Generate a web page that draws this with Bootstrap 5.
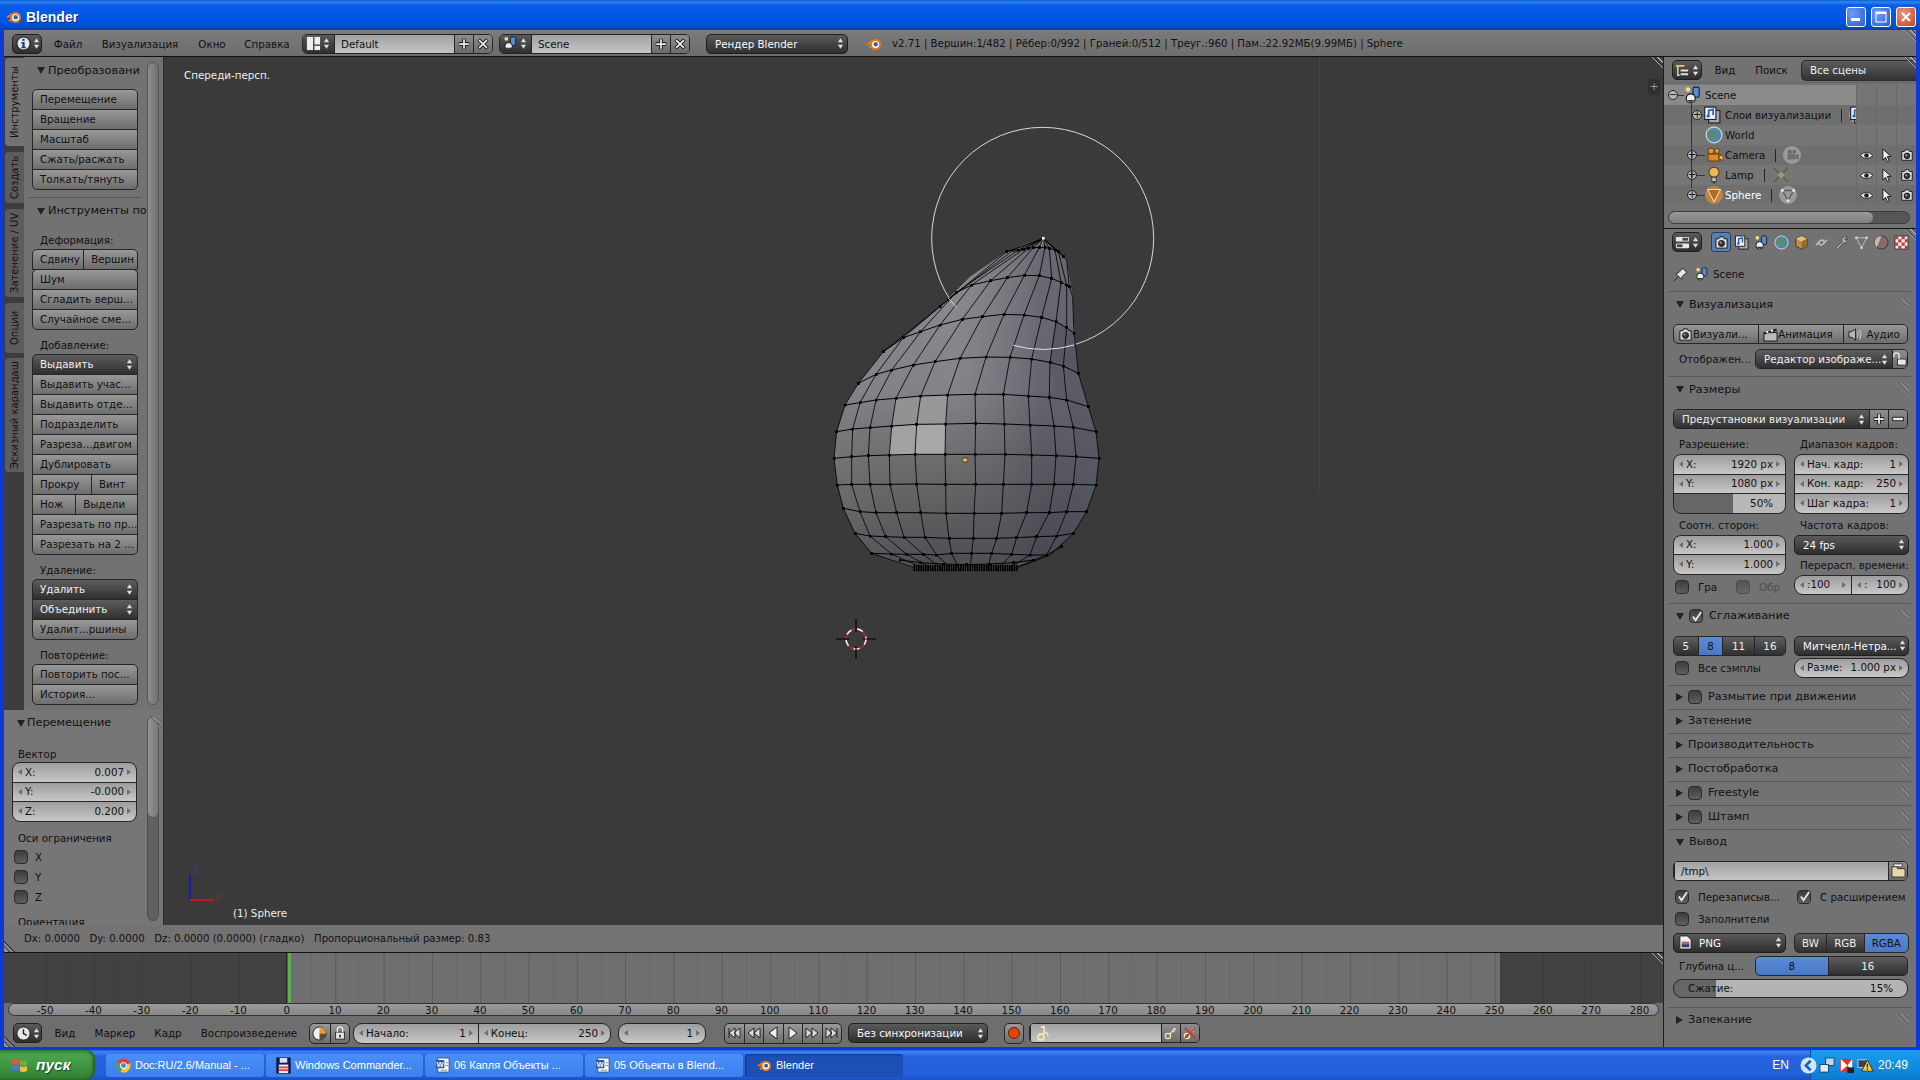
<!DOCTYPE html>
<html lang="ru">
<head>
<meta charset="utf-8">
<title>Blender</title>
<link href="https://cdn.jsdelivr.net/npm/bootstrap@5.3.0/dist/css/bootstrap.min.css" rel="stylesheet">
<style>
html,body{height:1080px;width:1920px;margin:0;overflow:hidden}
body{font-family:"DejaVu Sans",sans-serif;font-size:10.3px;line-height:16px;color:#111;background:#0a3ad8}
svg{display:block;flex:none}
.xp-title{height:30px;background:linear-gradient(#0b5ad8 0,#2f86f2 2px,#0c5ce6 5px,#0058e6 16px,#0055e0 22px,#0048c6 28px,#0a3ea8 30px);color:#fff;padding:3px 0 0 6px}
.xp-title b{font:bold 14px "Liberation Sans",sans-serif;margin-left:4px;text-shadow:1px 1px 0 #0a2a80}
.xp-ctl{width:20px;height:20px;border:1px solid #fff;border-radius:3px;background:radial-gradient(circle at 30% 30%,#6f9cf2,#2a5ad8);margin-left:5px}
.xp-x{background:radial-gradient(circle at 35% 30%,#eb9a80,#c8401c)}
.xp-app{height:1020px;border:solid #0a3ad8;border-width:0 4px 3px}
.t-head{height:27px;background:linear-gradient(#7b7b7b,#6d6d6d);border-bottom:1px solid #111;display:grid;align-items:center;position:relative}
.t-main{grid-template-columns:8px 30px 52px 92px 52px 58px 6px 191px 6px 191px 16px 142px 18px 16px 10px 1fr;padding-top:1px}
.t-tl{height:31px;border:0;grid-template-columns:9px 29px 46px 54px 52px 110px 5px 41px 3px 258px 7px 88px 18px 118px 6px 140px 16px 20px 5px 171px 1fr;background:#6e6e6e;padding-top:3px}
.t-c{text-align:center;white-space:nowrap;font-size:10.3px}
.t-info{font-size:10.2px;white-space:nowrap}
.bl-sel{height:20px;background:linear-gradient(#5a5a5a,#2e2e2e);border:1px solid #1f1f1f;border-radius:5px;padding:0 3px 0 4px;gap:2px;white-space:nowrap;overflow:hidden}
.w30{width:30px;padding:0;flex:none}
.bl-dg{height:20px;border:1px solid #242424;border-radius:5px;overflow:hidden}
.bl-dg-ic{background:linear-gradient(#5a5a5a,#2e2e2e);gap:2px;padding:0 3px;width:31px;height:100%}
.bl-dg-f{flex:1;height:100%;background:linear-gradient(#a2a2a2,#c4c4c4);border-left:1px solid #242424;padding:0 6px;line-height:18px;font-size:10.3px}
.bl-dg-b{width:19px;height:100%;background:linear-gradient(#8d8d8d,#6c6c6c);border-left:1px solid #242424}
.bl-btn{--bs-btn-border-radius:5px;height:21px;padding:0 7px;font-size:10.3px;line-height:19px;text-align:left;white-space:nowrap;overflow:hidden;color:#111;background:linear-gradient(#989898,#6d6d6d);border:1px solid #262626}
.s20>.btn,.btn.s20{height:20px}
.bl-drk{color:#eee;background:linear-gradient(#5e5e5e,#2f2f2f)}
.bl-blue{color:#111;background:linear-gradient(#5b8ad6,#4a78c4)}
.bl-ctr{text-align:center;padding:0}
.bl-t{height:20.5px}
.bl-num{--bs-btn-border-radius:8px;padding:0 5px;background:linear-gradient(#9d9d9d,#c8c8c8);color:#111;display:flex;align-items:center;justify-content:space-between}
.bl-num span{display:flex;align-items:center}
.bl-al{width:0;height:0;border:3px solid transparent;border-right:4px solid #6e6e6e;border-left:0;margin-right:3px}
.bl-ar{width:0;height:0;border:3px solid transparent;border-left:4px solid #6e6e6e;border-right:0;margin-left:3px}
.bl-pct{justify-content:flex-end;padding-right:12px;background:linear-gradient(90deg,#666 0,#666 53%,#b8b8b8 53%,#b8b8b8 100%)}
.bl-cmp{background:linear-gradient(90deg,#666 0,#666 18%,#b4b4b4 18%,#b4b4b4 100%);height:19px;padding:0 14px}
.bl-tabs{width:20px;background:#3d3d3d;padding-top:1px}
.bl-tab{margin-left:1px;width:19px;writing-mode:vertical-rl;transform:rotate(180deg);background:#5c5c5c;border-radius:0 4px 4px 0;text-align:center;line-height:19px;font-size:10px;color:#111;overflow:hidden;white-space:nowrap}
.bl-tab.on{background:#737373}
.th1{height:88px}.th2{height:51px;margin-top:6px}.th3{height:88px;margin-top:6px}.th4{height:50px;margin-top:6px}.th5{height:114px;margin-top:5px}
.bl-shelf{height:653px}
.bl-sb{width:139px;background:#727272;position:relative;overflow:hidden}
.bl-col{margin-left:8px;width:106px}
.bl-hd{height:27px;font-size:11.3px;white-space:nowrap;position:relative;padding-left:13px;width:127px;overflow:hidden}
.bl-hd .tri-d{margin-right:3px}
.bl-hr{height:1px;margin:7px 22px 0 5px;background:#565656;opacity:1;border:0}
.bl-hd.h2{height:26px}
.tri-d{width:0;height:0;border:solid transparent;border-width:7px 4.5px 0;border-top-color:#222;margin-right:5px;flex:none}
.tri-r{width:0;height:0;border:solid transparent;border-width:4.5px 0 4.5px 7px;border-left-color:#222;margin-right:5px;flex:none}
.bl-lb{height:16px;line-height:16px;white-space:nowrap;overflow:hidden;padding-left:16px}
.m1{margin-top:1px}.m2{margin-top:2px}.m3{margin-top:3px}.m4{margin-top:4px}.m5{margin-top:5px}.m6{margin-top:6px}.m7{margin-top:7px}.m8{margin-top:8px}.m9{margin-top:9px}.m10{margin-top:10px}
.bl-scr{position:absolute;left:123px;width:12px;border:1px solid #555;border-radius:6px;background:linear-gradient(90deg,#8f8f8f,#6f6f6f)}
.bs1{top:5px;height:643px}
.bl-op{height:215px;width:159px;background:#767676;position:relative;overflow:hidden;padding-left:8px}
.bl-op .bl-hd{padding-left:5px;height:26px;width:130px}
.bl-op .bl-hd .tri-d{margin-right:2px}
.bl-opc{margin-left:0;width:125px}
.bl-op .bl-lb{padding-left:6px}
.bl-op .bl-ck>span:last-child{margin-left:7px}
.bs2{left:143px;top:6px;height:205px;background:#606060;border-color:#505050}
.bs2i{position:absolute;left:-1px;top:-1px;width:12px;height:102px;border:1px solid #555;border-radius:6px;background:linear-gradient(90deg,#959595,#777)}
.bl-chk{width:14px;height:14px;border-radius:4px;border:1px solid #2a2a2a;background:linear-gradient(#3d3d3d,#5f5f5f);flex:none;display:flex;align-items:center;justify-content:center}
.bl-chk.dim{opacity:.55}
.bl-ck{height:14px;white-space:nowrap}
.bl-ck>span:last-child{margin-left:9px}
.dimt{color:#4e4e4e}
.w63{width:63px;flex:none}
.bl-w1{width:124px;flex:none}
.vp{flex:1;min-width:0;background:#3a3a3a;position:relative;overflow:hidden;border-left:1px solid #2c2c2c}
.vp-cap{position:absolute;left:20px;top:10px;color:#eee}
.vp-sel{position:absolute;left:69px;top:848px;color:#eee}
.vp-red{position:absolute;left:0;right:0;top:434px;height:1px;background:#5f2b2d}
.vp-v{position:absolute;left:1155px;top:0;height:434px;width:1px;background:#444}
.vp-mesh{position:absolute;left:636px;top:53px}
.vp-cur{position:absolute;left:670px;top:560px}
.vp-ax{position:absolute;left:17px;top:805px}
.vp-plus{position:absolute;left:1484px;top:22px;width:12px;height:16px;background:#2f2f2f;border-radius:4px 0 0 4px;color:#999;text-align:center;line-height:15px;font-size:11px}
.st-bar{height:28px;background:#737373;border-bottom:1px solid #111;padding-left:20px;white-space:pre;font-size:10.15px}
.tl{height:50px;position:relative;background-color:#6f6f6f;background-image:linear-gradient(90deg,#5d5d5d 1px,transparent 1px),linear-gradient(90deg,#676767 1px,transparent 1px);background-size:48.32px 100%,24.16px 100%;background-position:287px 0,287px 0;background-attachment:fixed}
.tl-d{position:absolute;top:0;bottom:0;background-color:rgba(38,38,38,.62)}
.tl-d1{left:0;width:283px;border-right:1px solid #222}
.tl-d2{left:1496px;right:0}
.tl-g{position:absolute;left:284px;top:0;bottom:0;width:3px;background:#5fb04c}
.rul-w{height:13px;background:#6e6e6e;padding:0 4px}
.rul{height:13px;border:1px solid #333;border-radius:7px;background:linear-gradient(#9a9a9a,#888);overflow:hidden;padding-left:12px;font-size:10.3px;line-height:12px;color:#111}
.rul span{width:48.32px;text-align:center;flex:none}
.rp{flex:0 0 253px;width:253px;background:#727272;border-left:1px solid #1c1c1c;overflow:hidden}
.lc{min-width:0}
.o-hd{height:26px;padding:1px 0 0 8px;border-bottom:1px solid #666;position:relative}
.o-m{width:46px;text-align:center}
.o-m2{width:47px}
.o-drop{flex:1;height:21px;background:linear-gradient(#5c5c5c,#333);border:1px solid #2a2a2a;border-right:0;border-radius:5px 0 0 5px;color:#eee;line-height:19px;padding-left:8px;margin-left:6px}
.o-rows{height:128px;padding-top:2px;position:relative;--bs-list-group-bg:transparent;--bs-list-group-border-width:0;--bs-list-group-border-radius:0}
.o-row{height:20px;padding:0;background:#767676;color:#111;white-space:nowrap;display:flex;align-items:center}
.o-row:nth-child(even){background:#6f6f6f}
.o-l{width:192px;overflow:hidden;height:100%;display:flex;align-items:center;position:relative}
.o-l.hl{background:#8a8a8a}
.o-c{width:20px;height:100%;border-left:1px solid #696969;display:flex;align-items:center;justify-content:center}
.o-exp{width:10px;height:10px;border-radius:50%;border:1px solid #222;background:#b5b5b5;position:relative;flex:none;font-size:10px;line-height:8px;text-align:center;color:#111}
.o-stub{height:1px;background:#333;flex:none}
.w1{width:1px}.w6{width:6px}.w8{width:8px}
.pl4{padding-left:4px}.pl23{padding-left:23px}.pl28{padding-left:28px}.pl41{padding-left:41px}
.ml2{margin-left:2px}.ml3{margin-left:3px}.ml4{margin-left:4px}.ml7{margin-left:7px}.ml10{margin-left:10px}.ml12{margin-left:12px}
.o-sep{width:1px;height:13px;background:#222;flex:none}
.o-tree{position:absolute;left:27px;top:21px;width:1px;height:84px;background:#333}
.o-scr{height:13px;margin:0 6px 4px 4px;border:1px solid #3c3c3c;border-radius:7px;background:#565656;overflow:hidden}
.o-thumb{width:204px;height:100%;background:linear-gradient(#9a9a9a,#7d7d7d);border-radius:7px}
.p-hd{height:27px;border-top:1px solid #111;padding-left:8px;position:relative}
.p-tabs{margin-left:9px}
.p-tab{width:20px;height:20px;display:flex;align-items:center;justify-content:center}
.p-tab.on{background:#5b7fb4;border:1px solid #26405f;border-radius:3px}
.p-sc{height:18px;margin-top:10px;padding-left:9px}
.sec{margin-left:5px;margin-right:5px;border-top:1px solid #565656}
.sec-b{padding:0 3px 0 4px}
.s-h{height:25px;font-size:11.3px;padding-left:7px;position:relative;white-space:nowrap}
.s-h.c23{height:23px}
.s-h .bl-chk{margin-right:6px}
.s-h .bl-chk+span{margin-left:0}
.grip{position:absolute;right:2px;top:6px;width:14px;height:14px;background:repeating-linear-gradient(45deg,transparent 0,transparent 2px,#8c8c8c 2px,#8c8c8c 3px,#5c5c5c 3px,#5c5c5c 4px);clip-path:polygon(0 0,100% 100%,100% 0)}
.corner{position:absolute;width:13px;height:13px;background:repeating-linear-gradient(45deg,transparent 0,transparent 2px,#a8a8a8 2px,#a8a8a8 3px,#3e3e3e 3px,#3e3e3e 4px)}
.ctr{right:0;top:0;clip-path:polygon(0 0,100% 0,100% 100%)}
.cbl{left:0;bottom:0;clip-path:polygon(0 0,0 100%,100% 100%)}
.c2l{width:113px;flex:none}.c2r{width:115px;flex:none}.gap8{gap:8px}
.rl{height:16px;line-height:16px;padding-left:6px;white-space:nowrap;overflow:hidden}
.rw82{width:82px;flex:none}
.bl-cl{--bs-btn-border-radius:9px}
.taskb{height:30px;background:linear-gradient(#2a5edc 0,#3f84f0 2px,#2663e0 6px,#2260da 24px,#1c50c4 30px)}
.st-btn{width:95px;height:30px;background:linear-gradient(#3f8f3f,#4aa34a 20%,#3a8e3a 70%,#2f7a2f);border-radius:0 9px 9px 0;color:#fff;padding-left:11px;box-shadow:inset -2px 0 3px #1d5c1d;margin-right:11px}
.st-btn i{font:italic bold 15.500px "Liberation Sans",sans-serif;margin-left:7px;text-shadow:1px 1px 1px #143}
.tk{height:23px;border-radius:3px;background:linear-gradient(#4a8ef6,#3b80ef);color:#fff;font:11px "Liberation Sans",sans-serif;padding-left:10px;gap:4px;white-space:nowrap;margin-right:2px;overflow:hidden}
.tk.w158{width:158px}.tk.w157{width:157px}.tk.on{background:#1d4fb4;box-shadow:inset 1px 1px 2px #123a8e;padding-left:12px}
.tray{width:110px;height:30px;background:linear-gradient(#18a0f0,#0f8ae0 60%,#0c79d0);box-shadow:inset 1px 0 1px #0d4ea8;color:#fff;font:12px "Liberation Sans",sans-serif;gap:2px}
.tray-a{margin-left:-10px}
.en{color:#fff;font:12px "Liberation Sans",sans-serif;margin-right:21px}
.tm{margin-left:2px}
</style>
</head>
<body>
<svg width="0" height="0" class="position-absolute">
<defs>
<symbol id="ud" viewBox="0 0 8 14"><path d="M4 1 7 5.500H1zM4 13 1 8.500h6z" fill="#ddd"/></symbol>
<symbol id="i-info" viewBox="0 0 16 16"><circle cx="8" cy="8" r="7" fill="#dfe6f0" stroke="#111"/><rect x="6.800" y="3" width="2.400" height="2.200" fill="#2a3a5a"/><path d="M5.800 6.500h3.400v5h1.200v1.500H5.800v-1.500h1v-3.500h-1z" fill="#2a3a5a"/></symbol>
<symbol id="i-lay" viewBox="0 0 16 16"><rect x="1" y="1" width="6.500" height="14" fill="#eee"/><rect x="9" y="1" width="6" height="8" fill="#eee"/><rect x="9" y="10.500" width="6" height="4.500" fill="#eee"/></symbol>
<symbol id="i-scene" viewBox="0 0 16 16"><circle cx="3.500" cy="3" r="2" fill="#f5e27a"/><rect x="8" y="1" width="5.500" height="9" rx="1.500" fill="#5a8ad4" stroke="#123"/><circle cx="6" cy="11" r="4" fill="#eee" stroke="#111"/><path d="M2.800 12.500a3.800 3.800 0 0 0 6.400 0z" fill="#333"/></symbol>
<symbol id="i-plus" viewBox="0 0 16 16"><path d="M8 2v12M2 8h12" stroke="#111" stroke-width="4"/><path d="M8 2.500v11M2.500 8h11" stroke="#eee" stroke-width="2"/></symbol>
<symbol id="i-x" viewBox="0 0 16 16"><path d="M3 3l10 10M13 3 3 13" stroke="#111" stroke-width="4"/><path d="M3.500 3.500l9 9M12.500 3.500l-9 9" stroke="#eee" stroke-width="2"/></symbol>
<symbol id="i-minus" viewBox="0 0 16 16"><rect x="2" y="6" width="12" height="4" fill="#eee" stroke="#111"/></symbol>
<symbol id="i-bl" viewBox="0 0 16 16"><path d="M1 8.500 6 5l1 2-3 2M3 12l3-2" stroke="#e8781a" stroke-width="2" fill="none"/><circle cx="9.500" cy="8.500" r="4.500" fill="#fff" stroke="#e8781a" stroke-width="2"/><circle cx="9.700" cy="8.300" r="2.200" fill="#2a6aa8"/></symbol>
<symbol id="i-out" viewBox="0 0 16 16"><path d="M1 2h9v2H1z" fill="#eccf5a"/><path d="M3 4v9h2" fill="none" stroke="#ddd" stroke-width="1.500"/><path d="M6 7h8v2H6zM6 11h8v2H6z" fill="#ddd"/></symbol>
<symbol id="i-pro" viewBox="0 0 16 16"><rect x="1" y="2" width="14" height="5" rx="1" fill="#e8e8e8"/><rect x="8" y="3" width="6" height="3" fill="#444"/><rect x="1" y="9" width="14" height="5" rx="1" fill="#e8e8e8"/><rect x="2" y="10" width="6" height="3" fill="#444"/></symbol>
<symbol id="i-cam" viewBox="0 0 16 16"><path d="M2 4h3l1-2h4l1 2h3v10H2z" fill="#d8d8d8" stroke="#111"/><circle cx="8" cy="9" r="3.200" fill="#3c3c3c" stroke="#111"/><circle cx="7" cy="8" r="1" fill="#aaa"/></symbol>
<symbol id="i-lyr" viewBox="0 0 16 16"><rect x="5" y="4" width="10" height="11" fill="#aaa" stroke="#222"/><rect x="1.500" y="1" width="10" height="11" fill="#e8eef8" stroke="#222"/><path d="M5 9V4l4-1v5" stroke="#2a5ab8" stroke-width="1.500" fill="none"/><circle cx="4.500" cy="9" r="1.300" fill="#2a5ab8"/></symbol>
<symbol id="i-world" viewBox="0 0 16 16"><circle cx="8" cy="8" r="7" fill="#4e8aa8" stroke="#d8d8d8" stroke-width="1"/><path d="M4 5q3-2 5 0t-1 3 0 3-3-1-1-5zM11 9l2 1-2 3z" fill="#5f8a5a"/></symbol>
<symbol id="i-camo" viewBox="0 0 18 16"><circle cx="6" cy="4" r="3" fill="#e09a38" stroke="#6a3c08"/><circle cx="12" cy="4" r="2.500" fill="#e09a38" stroke="#6a3c08"/><rect x="3" y="7" width="11" height="7" fill="#d88a2a" stroke="#6a3c08"/><path d="M14 9l4-1.500v6L14 12z" fill="#e8b468" stroke="#6a3c08"/></symbol>
<symbol id="i-lamp" viewBox="0 0 16 16"><circle cx="8" cy="5.500" r="4.500" fill="#e8b85a" stroke="#6a4008"/><rect x="6" y="10" width="4" height="4" fill="#c8c0a8" stroke="#444"/><rect x="7" y="14" width="2" height="1.500" fill="#333"/></symbol>
<symbol id="i-tri" viewBox="0 0 16 16"><circle cx="8" cy="8" r="8" fill="#d88a3a" opacity=".75"/><path d="M3 3.500h10L8 13z" fill="none" stroke="#f6dfa8" stroke-width="1.800"/><path d="M3 3.500h10L8 13z" fill="#b06a2a"/></symbol>
<symbol id="i-gcam" viewBox="0 0 16 16"><circle cx="8" cy="8" r="8" fill="#9a9a9a"/><circle cx="6" cy="5" r="2" fill="#6e6e6e"/><circle cx="10" cy="5" r="1.800" fill="#6e6e6e"/><rect x="4" y="7" width="7" height="5" fill="#6e6e6e"/><path d="M11 8l3-1v5l-3-1z" fill="#6e6e6e"/></symbol>
<symbol id="i-glamp" viewBox="0 0 16 16"><path d="M2 2l12 12M14 2 2 14" stroke="#5a5f4a" stroke-width="1.500"/><circle cx="8" cy="8" r="2.500" fill="#9a9a78"/></symbol>
<symbol id="i-gtri" viewBox="0 0 16 16"><circle cx="8" cy="8" r="8" fill="#9a9a9a"/><path d="M3 4h10L8 13z" fill="none" stroke="#5f5f5f" stroke-width="1.200"/><circle cx="3" cy="4" r="1.300" fill="#eee"/><circle cx="13" cy="4" r="1.300" fill="#eee"/><circle cx="8" cy="13" r="1.300" fill="#eee"/></symbol>
<symbol id="i-eye" viewBox="0 0 16 12"><path d="M1 6q7-7 14 0-7 7-14 0z" fill="#eee" stroke="#222"/><circle cx="8" cy="6" r="2.500" fill="#222"/></symbol>
<symbol id="i-ptr" viewBox="0 0 12 16"><path d="M2 1v12l3-3 2 5 2-1-2-5h4z" fill="#eee" stroke="#111"/></symbol>
<symbol id="i-cube" viewBox="0 0 16 16"><path d="M8 1l6 3v8l-6 3-6-3V4z" fill="#c08c4a" stroke="#333"/><path d="M8 1l6 3-6 3-6-3z" fill="#e8c07a"/><path d="M8 7l6-3v8l-6 3z" fill="#9a6a30"/></symbol>
<symbol id="i-link" viewBox="0 0 16 16"><path d="M2 11l5-5a2.500 2.500 0 0 1 3.500 3.500M14 5l-5 5a2.500 2.500 0 0 1-3.500-3.500" fill="none" stroke="#c4c4c4" stroke-width="1.500"/></symbol>
<symbol id="i-wr" viewBox="0 0 16 16"><path d="M2 14l7-7a3.500 3.500 0 0 1 4.500-5L11 4.500 12 6l2.500-2A3.500 3.500 0 0 1 10 8l-6.500 7.500z" fill="#b8c4d8" stroke="#333" stroke-width=".7"/></symbol>
<symbol id="i-mtri" viewBox="0 0 16 16"><path d="M2.500 3h11L8 13.500z" fill="none" stroke="#c0c0c0"/><circle cx="2.500" cy="3" r="1.300" fill="#ddd"/><circle cx="13.500" cy="3" r="1.300" fill="#ddd"/><circle cx="8" cy="13.500" r="1.300" fill="#ddd"/></symbol>
<symbol id="i-mat" viewBox="0 0 16 16"><circle cx="8" cy="8" r="7" fill="#8a6a6a" stroke="#333"/><path d="M8 1a7 7 0 0 0-5 12z" fill="#c8b8b8"/></symbol>
<symbol id="i-tex" viewBox="0 0 16 16"><rect x="1" y="1" width="14" height="14" fill="#eee" stroke="#333"/><path d="M1 1h3.500v3.500H1zM8 1h3.500v3.500H8zM4.500 4.500H8V8H4.500zM11.500 4.500H15V8h-3.500zM1 8h3.500v3.500H1zM8 8h3.500v3.500H8zM4.500 11.500H8V15H4.500zM11.500 11.500H15V15h-3.500z" fill="#b8483c"/></symbol>
<symbol id="i-pin" viewBox="0 0 16 16"><path d="M10 1l5 5-2 1-3 3-1 3-6-6 3-1 3-3zM5 11l-4 4" fill="#e4e4e4" stroke="#222"/></symbol>
<symbol id="i-clap" viewBox="0 0 16 16"><rect x="1" y="6" width="14" height="9" fill="#bbb" stroke="#111"/><path d="M1 6 14 1.500l1 2.500L2 8z" fill="#222"/><path d="M3 5l2-1 1 2-2 1zM8 3.500l2-1 1 2-2 1z" fill="#eee"/></symbol>
<symbol id="i-spk" viewBox="0 0 16 16"><path d="M1 5h3l4-3v12l-4-3H1z" fill="#b8b8b8" stroke="#222"/><path d="M10 5q2 3 0 6M12.500 3q3 5 0 10" fill="none" stroke="#d8d8d8"/></symbol>
<symbol id="i-lock" viewBox="0 0 16 16"><rect x="3" y="7" width="10" height="8" fill="#e6e6e6" stroke="#222"/><path d="M5 7V4a3 3 0 0 1 6 0v3" fill="none" stroke="#eee" stroke-width="1.500"/><rect x="7" y="10" width="2" height="3" fill="#333"/></symbol>
<symbol id="i-open" viewBox="0 0 16 16"><rect x="5" y="8" width="10" height="7" fill="#e6e6e6" stroke="#222"/><path d="M1 6V4a3 3 0 0 1 6 0v4" fill="none" stroke="#eee" stroke-width="1.500"/></symbol>
<symbol id="i-fold" viewBox="0 0 16 16"><path d="M3 1h9v3H3z" fill="#fff" stroke="#444"/><path d="M1 4h5l1 2h8v9H1z" fill="#e6d8a4" stroke="#333"/></symbol>
<symbol id="i-clk" viewBox="0 0 16 16"><circle cx="8" cy="8" r="7" fill="#e8e8e8" stroke="#222"/><path d="M8 3.500V8l3.500 2" fill="none" stroke="#222" stroke-width="1.500"/></symbol>
<symbol id="i-clk2" viewBox="0 0 16 16"><circle cx="8" cy="8" r="7" fill="#eee" stroke="#222"/><path d="M8 8V1a7 7 0 0 1 7 7z" fill="#e89a2a"/><path d="M8 8h7a7 7 0 0 1-7 7z" fill="#5a4a3a"/></symbol>
<symbol id="i-png" viewBox="0 0 16 16"><path d="M2 1h8l4 4v10H2z" fill="#eee" stroke="#222"/><rect x="4" y="7" width="8" height="6" fill="#b4607a"/><rect x="4" y="10" width="8" height="3" fill="#3a3a6a"/></symbol>
<symbol id="i-key" viewBox="0 0 16 16"><circle cx="4.500" cy="11.500" r="3" fill="none" stroke="#f0e8b0" stroke-width="1.500"/><path d="M6.500 9.500l6-7M10 5l2 2M12 3l1.500 1.500" fill="none" stroke="#f0e8b0" stroke-width="1.500"/></symbol>
<symbol id="i-key2" viewBox="0 0 16 16"><path d="M6 2h3v7" fill="none" stroke="#f0e8b0" stroke-width="1.800"/><circle cx="6" cy="12" r="3" fill="none" stroke="#f0e8b0" stroke-width="1.800"/><path d="M9 7q4 1 4 4" fill="none" stroke="#f0e8b0" stroke-width="1.500"/></symbol>
<symbol id="i-win" viewBox="0 0 18 18"><path d="M1 4q3-2 7 0v5q-4-2-7 0z" fill="#e0563a"/><path d="M9 4q3 2 7 0v5q-4 2-7 0z" fill="#6ab04a"/><path d="M1 10q3-2 7 0v5q-4-2-7 0z" fill="#4a7ad8"/><path d="M9 10q3 2 7 0v5q-4 2-7 0z" fill="#eec23a"/></symbol>
<symbol id="i-chr" viewBox="0 0 16 16"><circle cx="8" cy="8" r="7.500" fill="#d8443a"/><path d="M8 8 1.500 4.200A7.500 7.500 0 0 0 5 14.900z" fill="#4aa650"/><path d="M8 8 5 15A7.500 7.500 0 0 0 15 5.500z" fill="#f2c638"/><circle cx="8" cy="8" r="3.600" fill="#fff"/><circle cx="8" cy="8" r="2.600" fill="#4a80e0"/></symbol>
<symbol id="i-flp" viewBox="0 0 16 18"><rect x="1" y="1" width="14" height="16" fill="#111a6a" stroke="#000"/><rect x="4" y="1" width="8" height="5" fill="#dde"/><rect x="3" y="8" width="10" height="9" fill="#eee"/><rect x="3" y="10" width="10" height="2" fill="#d44"/><rect x="3" y="13" width="10" height="2" fill="#d44"/></symbol>
<symbol id="i-wd" viewBox="0 0 16 18"><path d="M3 1h12v15H3z" fill="#fff" stroke="#456"/><path d="M1 3h9v9H1z" fill="#2a5ab0"/><text x="5.500" y="10.500" font-size="8" font-weight="700" text-anchor="middle" fill="#fff" font-family="Liberation Sans">W</text><path d="M6 14h7M11 6h3M11 9h3" stroke="#789"/></symbol>
<symbol id="i-net" viewBox="0 0 18 18"><rect x="7" y="1" width="9" height="8" fill="#bcd8f4" stroke="#245"/><rect x="1" y="8" width="9" height="8" fill="#dcecfa" stroke="#245"/></symbol>
<symbol id="i-kav" viewBox="0 0 18 18"><rect x="2" y="2" width="13" height="13" fill="#d8342a"/><path d="M3 2l7 7-7 6zM15 2l-5 7 5 6z" fill="#fff"/><rect x="10" y="11" width="7" height="6" fill="#222"/></symbol>
<symbol id="i-warn" viewBox="0 0 18 18"><rect x="1" y="3" width="10" height="8" fill="#345" stroke="#ccd"/><path d="M11 3l6 12H5z" fill="#f4d43a" stroke="#333"/><rect x="10.300" y="7" width="1.400" height="4" fill="#222"/><rect x="10.300" y="12" width="1.400" height="1.500" fill="#222"/></symbol>
<marker id="vx" markerWidth="9" markerHeight="9" refX="4.500" refY="4.500" markerUnits="userSpaceOnUse"><rect width="9" height="9" fill="#000"/></marker>
<linearGradient id="mv" x1="0" y1="385" x2="0" y2="1385" gradientUnits="userSpaceOnUse"><stop offset="0" stop-color="#8c8c90"/><stop offset=".45" stop-color="#84848a"/><stop offset=".65" stop-color="#6e6e70"/><stop offset="1" stop-color="#4c4c50"/></linearGradient>
<linearGradient id="mh" x1="100" y1="0" x2="900" y2="0" gradientUnits="userSpaceOnUse"><stop offset="0" stop-color="#8a8a8a" stop-opacity=".25"/><stop offset=".45" stop-color="#5c5c66" stop-opacity="0"/><stop offset=".78" stop-color="#40404e" stop-opacity=".45"/><stop offset="1" stop-color="#4c4c60" stop-opacity=".6"/></linearGradient>
</defs>
</svg>

<header class="xp-title d-flex align-items-center">
<svg width="16" height="16"><use href="#i-bl"/></svg><b>Blender</b>
<div class="ms-auto d-flex align-items-center me-1">
<div class="xp-ctl d-flex align-items-end ps-1 pb-1"><svg width="10" height="4"><rect width="9" height="3" fill="#fff"/></svg></div>
<div class="xp-ctl d-flex align-items-center justify-content-center"><svg width="12" height="12"><rect x="1" y="1" width="10" height="10" fill="none" stroke="#fff"/><rect x="1" y="1" width="10" height="2" fill="#fff"/></svg></div>
<div class="xp-ctl xp-x d-flex align-items-center justify-content-center"><svg width="12" height="12"><path d="M2 2l8 8M10 2l-8 8" stroke="#fff" stroke-width="2"/></svg></div>
</div>
</header>

<div class="xp-app d-flex flex-column">
<div class="t-head t-main">
<span></span>
<div class="bl-sel d-flex align-items-center justify-content-center"><svg width="15" height="15"><use href="#i-info"/></svg><svg width="7" height="13"><use href="#ud"/></svg></div>
<div class="t-c">Файл</div><div class="t-c">Визуализация</div><div class="t-c">Окно</div><div class="t-c">Справка</div><span></span>
<div class="bl-dg d-flex align-items-center"><div class="bl-dg-ic d-flex align-items-center"><svg width="15" height="15"><use href="#i-lay"/></svg><svg width="7" height="13"><use href="#ud"/></svg></div><div class="bl-dg-f">Default</div><div class="bl-dg-b d-flex align-items-center justify-content-center"><svg width="14" height="14"><use href="#i-plus"/></svg></div><div class="bl-dg-b d-flex align-items-center justify-content-center"><svg width="14" height="14"><use href="#i-x"/></svg></div></div>
<span></span>
<div class="bl-dg d-flex align-items-center"><div class="bl-dg-ic d-flex align-items-center"><svg width="15" height="15"><use href="#i-scene"/></svg><svg width="7" height="13"><use href="#ud"/></svg></div><div class="bl-dg-f">Scene</div><div class="bl-dg-b d-flex align-items-center justify-content-center"><svg width="14" height="14"><use href="#i-plus"/></svg></div><div class="bl-dg-b d-flex align-items-center justify-content-center"><svg width="14" height="14"><use href="#i-x"/></svg></div></div>
<span></span>
<div class="bl-sel d-flex align-items-center justify-content-between text-light"><span class="ms-1">Рендер Blender</span><svg width="7" height="13"><use href="#ud"/></svg></div>
<span></span>
<svg width="16" height="16"><use href="#i-bl"/></svg><span></span>
<div class="t-info">v2.71 | Вершин:1/482 | Рёбер:0/992 | Граней:0/512 | Треуг.:960 | Пам.:22.92МБ(9.99МБ) | Sphere</div>
<div class="corner ctr"></div>
</div>

<div class="d-flex flex-grow-1 overflow-hidden">
<div class="lc d-flex flex-column flex-grow-1 overflow-hidden">
<div class="d-flex flex-grow-1 overflow-hidden">
<aside class="d-flex flex-column">
<div class="bl-shelf d-flex">
<nav class="bl-tabs">
<div class="bl-tab on th1">Инструменты</div>
<div class="bl-tab th2">Создать</div>
<div class="bl-tab th3">Затенение / UV</div>
<div class="bl-tab th4">Опции</div>
<div class="bl-tab th5">Эскизный карандаш</div>
</nav>
<div class="bl-sb">
<div class="bl-scr bs1"></div>
<div class="bl-hd d-flex align-items-center"><span class="tri-d"></span>Преобразовани</div>
<div class="bl-col m5"><div class="btn-group-vertical d-flex w-100">
<button class="btn bl-btn">Перемещение</button><button class="btn bl-btn">Вращение</button><button class="btn bl-btn">Масштаб</button><button class="btn bl-btn">Сжать/расжать</button><button class="btn bl-btn">Толкать/тянуть</button>
</div></div>
<hr class="bl-hr">
<div class="bl-hd h2 d-flex align-items-center"><span class="tri-d"></span>Инструменты по</div>
<div class="bl-lb m8">Деформация:</div>
<div class="bl-col m1"><div class="btn-group-vertical d-flex w-100">
<div class="btn-group d-flex"><button class="btn bl-btn">Сдвину</button><button class="btn bl-btn">Вершин</button></div>
<button class="btn bl-btn">Шум</button><button class="btn bl-btn">Сгладить верш...</button><button class="btn bl-btn">Случайное сме...</button>
</div></div>
<div class="bl-lb m7">Добавление:</div>
<div class="bl-col m1"><div class="btn-group-vertical d-flex w-100">
<button class="btn bl-btn bl-drk d-flex justify-content-between align-items-center pe-1">Выдавить<svg width="7" height="13"><use href="#ud"/></svg></button>
<button class="btn bl-btn">Выдавить учас...</button><button class="btn bl-btn">Выдавить отде...</button><button class="btn bl-btn">Подразделить</button><button class="btn bl-btn">Разреза...двигом</button><button class="btn bl-btn">Дублировать</button>
<div class="btn-group d-flex"><button class="btn bl-btn">Прокру</button><button class="btn bl-btn">Винт</button></div>
<div class="btn-group d-flex"><button class="btn bl-btn">Нож</button><button class="btn bl-btn">Выдели</button></div>
<button class="btn bl-btn">Разрезать по пр...</button><button class="btn bl-btn">Разрезать на 2 ...</button>
</div></div>
<div class="bl-lb m7">Удаление:</div>
<div class="bl-col m1"><div class="btn-group-vertical d-flex w-100">
<button class="btn bl-btn bl-drk d-flex justify-content-between align-items-center pe-1">Удалить<svg width="7" height="13"><use href="#ud"/></svg></button>
<button class="btn bl-btn bl-drk d-flex justify-content-between align-items-center pe-1">Объединить<svg width="7" height="13"><use href="#ud"/></svg></button>
<button class="btn bl-btn">Удалит...ршины</button>
</div></div>
<div class="bl-lb m7">Повторение:</div>
<div class="bl-col m1"><div class="btn-group-vertical d-flex w-100">
<button class="btn bl-btn">Повторить пос...</button><button class="btn bl-btn">История...</button>
</div></div>
</div>
</div>
<div class="bl-op">
<div class="bl-scr bs2"><div class="bs2i"></div></div>
<div class="grip"></div>
<div class="bl-hd d-flex align-items-center"><span class="tri-d"></span>Перемещение</div>
<div class="bl-lb m10">Вектор</div>
<div class="bl-opc"><div class="btn-group-vertical d-flex w-100">
<div class="btn bl-btn bl-t bl-num"><span><i class="bl-al"></i>X:</span><span>0.007<i class="bl-ar"></i></span></div>
<div class="btn bl-btn bl-t bl-num"><span><i class="bl-al"></i>Y:</span><span>-0.000<i class="bl-ar"></i></span></div>
<div class="btn bl-btn bl-t bl-num"><span><i class="bl-al"></i>Z:</span><span>0.200<i class="bl-ar"></i></span></div>
</div></div>
<div class="bl-lb m8">Оси ограничения</div>
<div class="bl-ck d-flex align-items-center m4"><span class="bl-chk ml2"></span><span>X</span></div>
<div class="bl-ck d-flex align-items-center m6"><span class="bl-chk ml2"></span><span>Y</span></div>
<div class="bl-ck d-flex align-items-center m6"><span class="bl-chk ml2"></span><span>Z</span></div>
<div class="bl-lb m10">Ориентация</div>
</div>
</aside>
<main class="vp">
<div class="vp-v"></div>
<div class="vp-red"></div>
<div class="vp-cap">Спереди-персп.</div>
<div class="vp-plus">+</div>
<svg class="vp-mesh" width="400" height="480" viewBox="0 0 1200 1440">
<circle cx="728" cy="385" r="333" fill="none" stroke="#d8d8d8" stroke-width="3"/>
<path d="M730 385 770 420 800 450 808 500 818 560 822 640 828 720 835 790 865 890 888 965 897 1045 888 1125 860 1205 820 1270 750 1335 650 1375 500 1385 340 1375 215 1330 165 1270 130 1195 112 1125 102 1045 110 965 135 885 175 820 250 725 310 680 420 590 510 500 620 425 680 400z" fill="url(#mv)"/>
<path d="M730 385 770 420 800 450 808 500 818 560 822 640 828 720 835 790 865 890 888 965 897 1045 888 1125 860 1205 820 1270 750 1335 650 1375 500 1385 340 1375 215 1330 165 1270 130 1195 112 1125 102 1045 110 965 135 885 175 820 250 725 310 680 420 590 510 500 620 425 680 400z" fill="url(#mh)"/>
<path d="M275 948 350 943 345 1033 268 1035z" fill="#a2a2a2"/><path d="M350 943 437 942 435 1033 345 1033z" fill="#a8a8a8"/>
<path d="M288 865 362 858 350 943 275 948z" fill="#929292"/><path d="M362 858 443 855 437 942 350 943z" fill="#989898"/>
<path d="M750 757 790 768 835 790 865 890 888 965 897 1045 828 1040 820 952 800 870 748 862 760 820z" fill="#55555f" opacity=".55"/>
<path d="M768 635 800 653 822 670 828 720 835 790 790 768 750 757z" fill="#50505c" opacity=".6"/>
<g fill="none" stroke="#000" stroke-width="3" stroke-linejoin="round" marker-start="url(#vx)" marker-mid="url(#vx)" marker-end="url(#vx)">
<polyline points="620,425 640,420 655,420 670,418 685,415 700,413 718,412 735,412 748,415 765,420 775,425 790,440"/>
<polyline points="420,590 445,568 468,548 515,525 572,512 622,503 673,496 718,497 755,505 783,517 800,525 808,530"/>
<polyline points="250,725 310,683 362,665 420,645 487,628 547,620 612,613 672,615 725,622 768,635 800,653 822,670"/>
<polyline points="175,820 228,793 275,780 340,765 405,755 480,745 558,741 630,742 695,747 750,757 790,768 835,790"/>
<polyline points="135,885 180,878 228,870 288,865 362,858 443,855 525,853 610,853 685,858 748,862 800,870 865,890"/>
<polyline points="110,965 158,957 210,953 275,948 350,943 437,942 527,940 613,942 690,945 762,948 820,952 888,965"/>
<polyline points="102,1045 155,1040 205,1037 268,1035 345,1033 435,1033 525,1033 615,1033 695,1035 768,1037 828,1040 897,1045"/>
<polyline points="112,1125 155,1123 210,1123 270,1123 350,1122 437,1123 527,1123 610,1123 695,1123 762,1123 820,1123 888,1125"/>
<polyline points="130,1195 180,1205 228,1208 290,1208 362,1208 438,1210 522,1210 605,1210 680,1208 748,1208 800,1205 860,1205"/>
<polyline points="165,1270 210,1278 257,1280 312,1282 375,1282 447,1285 520,1285 590,1285 650,1283 710,1280 770,1278 820,1270"/>
<polyline points="215,1330 275,1332 320,1333 370,1333 410,1335 455,1330 515,1330 575,1330 635,1333 690,1335 740,1335 785,1310"/>
<polyline points="300,1350 360,1358 430,1362 500,1364 570,1362 640,1358 700,1350"/>
</g>
<g fill="none" stroke="#000" stroke-width="2.500" stroke-linejoin="round">
<polyline points="730,385 620,425 420,590 250,725 175,820 135,885 110,965 102,1045 112,1125 130,1195 165,1270 215,1330 340,1372"/>
<polyline points="730,385 640,420 445,568 310,683 228,793 180,878 158,957 155,1040 155,1123 180,1205 210,1278 275,1332 370,1375"/>
<polyline points="730,385 655,420 468,548 362,665 275,780 228,870 210,953 205,1037 210,1123 228,1208 257,1280 320,1333 400,1378"/>
<polyline points="730,385 670,418 515,525 420,645 340,765 288,865 275,948 268,1035 270,1123 290,1208 312,1282 370,1333 430,1380"/>
<polyline points="730,385 685,415 572,512 487,628 405,755 362,858 350,943 345,1033 350,1122 362,1208 375,1282 410,1335 460,1382"/>
<polyline points="730,385 700,413 622,503 547,620 480,745 443,855 437,942 435,1033 437,1123 438,1210 447,1285 455,1330 480,1384"/>
<polyline points="730,385 718,412 673,496 612,613 558,741 525,853 527,940 525,1033 527,1123 522,1210 520,1285 515,1330 510,1384"/>
<polyline points="730,385 735,412 718,497 672,615 630,742 610,853 613,942 615,1033 610,1123 605,1210 590,1285 575,1330 560,1382"/>
<polyline points="730,385 748,415 755,505 725,622 695,747 685,858 690,945 695,1035 695,1123 680,1208 650,1283 635,1333 590,1380"/>
<polyline points="730,385 765,420 783,517 768,635 750,757 748,862 762,948 768,1037 762,1123 748,1208 710,1280 690,1335 620,1378"/>
<polyline points="730,385 775,425 800,525 800,653 790,768 800,870 820,952 828,1040 820,1123 800,1205 770,1278 740,1335 640,1376"/>
<polyline points="730,385 770,420 800,450 808,530 818,560 822,670 828,720 835,790 865,890 888,965 897,1045 888,1125 860,1205 820,1270 750,1335 655,1372"/>
</g>
<path d="M340 1374H655" stroke="#000" stroke-width="20" stroke-dasharray="5 2" fill="none"/>
<path d="M640 706A333 333 0 0 0 822 705M445 565 470 592" fill="none" stroke="#e0e0e0" stroke-width="3"/>
<ellipse cx="495" cy="1050" rx="9" ry="7" fill="#e2ab62" stroke="#111" stroke-width="2"/>
<rect x="726" y="381" width="8" height="8" fill="#fff6cc"/><path d="M730 389 724 410" stroke="#d8a050" stroke-width="2"/>
</svg>
<svg class="vp-cur" width="44" height="44" viewBox="0 0 44 44">
<circle cx="22" cy="22" r="10" fill="none" stroke="#8a2f3a" stroke-width="2"/>
<circle cx="22" cy="22" r="10" fill="none" stroke="#fff" stroke-width="1.500" stroke-dasharray="6 6"/>
<path d="M22 2v13M22 29v13M2 22h13M29 22h13" stroke="#000" stroke-width="1.200"/>
</svg>
<svg class="vp-ax" width="60" height="50" viewBox="0 0 60 50">
<path d="M9 38V12" stroke="#1a1ab8" stroke-width="2"/><path d="M9 38h24" stroke="#c01a1a" stroke-width="2"/>
<text x="12" y="11" font-size="9" fill="#3a3a8a" font-family="DejaVu Sans">Z</text><text x="33" y="38" font-size="9" fill="#7a2a2a" font-family="DejaVu Sans">X</text>
</svg>
<div class="vp-sel">(1) Sphere</div>
<div class="corner ctr"></div>
</main>
</div>
<div class="st-bar d-flex align-items-center position-relative">Dx: 0.0000   Dy: 0.0000   Dz: 0.0000 (0.0000) (гладко)   Пропорциональный размер: 0.83<div class="corner cbl"></div></div>
<div class="tl"><div class="tl-d tl-d1"></div><div class="tl-d tl-d2"></div><div class="tl-g"></div><div class="corner ctr"></div></div>
<div class="rul-w"><div class="rul d-flex">
<span>-50</span><span>-40</span><span>-30</span><span>-20</span><span>-10</span><span>0</span><span>10</span><span>20</span><span>30</span><span>40</span><span>50</span><span>60</span><span>70</span><span>80</span><span>90</span><span>100</span><span>110</span><span>120</span><span>130</span><span>140</span><span>150</span><span>160</span><span>170</span><span>180</span><span>190</span><span>200</span><span>210</span><span>220</span><span>230</span><span>240</span><span>250</span><span>260</span><span>270</span><span>280</span>
</div></div>
<div class="t-head t-tl">
<span></span>
<div class="bl-sel d-flex align-items-center justify-content-center"><svg width="15" height="15"><use href="#i-clk"/></svg><svg width="7" height="13"><use href="#ud"/></svg></div>
<div class="t-c">Вид</div><div class="t-c">Маркер</div><div class="t-c">Кадр</div><div class="t-c">Воспроизведение</div><span></span>
<div class="btn-group d-flex"><div class="btn bl-btn bl-ctr d-flex align-items-center justify-content-center"><svg width="15" height="15"><use href="#i-clk2"/></svg></div><div class="btn bl-btn bl-ctr d-flex align-items-center justify-content-center"><svg width="14" height="14"><use href="#i-lock"/></svg></div></div>
<span></span>
<div class="btn-group d-flex">
<div class="btn bl-btn bl-num bl-cl"><span><i class="bl-al"></i>Начало:</span><span>1<i class="bl-ar"></i></span></div>
<div class="btn bl-btn bl-num bl-cl"><span><i class="bl-al"></i>Конец:</span><span>250<i class="bl-ar"></i></span></div>
</div>
<span></span>
<div class="btn bl-btn bl-num bl-cl"><span><i class="bl-al"></i></span><span>1<i class="bl-ar"></i></span></div>
<span></span>
<div class="btn-group d-flex">
<div class="btn bl-btn bl-ctr d-flex align-items-center justify-content-center"><svg width="14" height="14" viewBox="0 0 14 14"><path d="M2 2v10M13 2 7 7l6 5zM8 2 2 7l6 5z" fill="#ddd" stroke="#222"/></svg></div>
<div class="btn bl-btn bl-ctr d-flex align-items-center justify-content-center"><svg width="14" height="14" viewBox="0 0 14 14"><path d="M13 2 7 7l6 5zM7 2 1 7l6 5z" fill="#ddd" stroke="#222"/></svg></div>
<div class="btn bl-btn bl-ctr d-flex align-items-center justify-content-center"><svg width="14" height="14" viewBox="0 0 14 14"><path d="M11 1 3 7l8 6z" fill="#eee" stroke="#222"/></svg></div>
<div class="btn bl-btn bl-ctr d-flex align-items-center justify-content-center"><svg width="14" height="14" viewBox="0 0 14 14"><path d="M3 1l8 6-8 6z" fill="#eee" stroke="#222"/></svg></div>
<div class="btn bl-btn bl-ctr d-flex align-items-center justify-content-center"><svg width="14" height="14" viewBox="0 0 14 14"><path d="M1 2l6 5-6 5zM7 2l6 5-6 5z" fill="#ddd" stroke="#222"/></svg></div>
<div class="btn bl-btn bl-ctr d-flex align-items-center justify-content-center"><svg width="14" height="14" viewBox="0 0 14 14"><path d="M12 2v10M1 2l6 5-6 5zM6 2l6 5-6 5z" fill="#ddd" stroke="#222"/></svg></div>
</div>
<span></span>
<div class="bl-sel d-flex align-items-center justify-content-between text-light"><span class="ms-1">Без синхронизации</span><svg width="7" height="13"><use href="#ud"/></svg></div>
<span></span>
<div class="btn bl-btn bl-ctr d-flex align-items-center justify-content-center"><svg width="14" height="14"><circle cx="7" cy="7" r="5.500" fill="#e0470f" stroke="#6a1a00"/></svg></div>
<span></span>
<div class="bl-dg d-flex align-items-center"><div class="bl-dg-f d-flex align-items-center ps-1"><svg width="16" height="16"><use href="#i-key2"/></svg></div><div class="bl-dg-b d-flex align-items-center justify-content-center"><svg width="14" height="14"><use href="#i-key"/></svg></div><div class="bl-dg-b d-flex align-items-center justify-content-center"><svg width="14" height="14" viewBox="0 0 16 16"><use href="#i-key"/><path d="M2 2l12 12M14 2 2 14" stroke="#c03a2a" stroke-width="2"/></svg></div></div>
<span></span>
<div class="corner cbl"></div>
</div>
</div>

<aside class="rp d-flex flex-column">
<div class="o-hd d-flex align-items-center">
<div class="bl-sel w30 d-flex align-items-center justify-content-center"><svg width="15" height="15"><use href="#i-out"/></svg><svg width="7" height="13"><use href="#ud"/></svg></div>
<div class="o-m">Вид</div><div class="o-m o-m2">Поиск</div>
<div class="o-drop">Все сцены</div>
<div class="corner ctr"></div>
</div>
<ul class="list-group list-group-flush o-rows">
<li class="list-group-item o-row"><div class="o-l hl pl4"><span class="o-exp">−</span><span class="o-stub w6"></span><svg width="18" height="18" viewBox="0 0 16 16"><use href="#i-scene"/></svg><span class="ml3">Scene</span></div><div class="o-c"></div><div class="o-c"></div><div class="o-c"></div></li>
<li class="list-group-item o-row"><div class="o-l pl28"><span class="o-exp">+</span><span class="o-stub w1"></span><svg width="18" height="18" viewBox="0 0 16 16"><use href="#i-lyr"/></svg><span class="ml4">Слои визуализации</span><span class="o-sep ml10"></span><svg class="ml7" width="18" height="18" viewBox="0 0 16 16"><circle cx="8" cy="8" r="8" fill="#9a9a9a"/><use href="#i-lyr"/></svg></div><div class="o-c"></div><div class="o-c"></div><div class="o-c"></div></li>
<li class="list-group-item o-row"><div class="o-l pl41"><svg width="18" height="18" viewBox="0 0 16 16"><use href="#i-world"/></svg><span class="ml2">World</span></div><div class="o-c"></div><div class="o-c"></div><div class="o-c"></div></li>
<li class="list-group-item o-row"><div class="o-l pl23"><span class="o-exp">+</span><span class="o-stub w8"></span><svg width="18" height="16" viewBox="0 0 18 16"><use href="#i-camo"/></svg><span class="ml2">Camera</span><span class="o-sep ml10"></span><svg class="ml7" width="18" height="18" viewBox="0 0 16 16"><use href="#i-gcam"/></svg></div><div class="o-c"><svg width="15" height="11"><use href="#i-eye"/></svg></div><div class="o-c"><svg width="11" height="15"><use href="#i-ptr"/></svg></div><div class="o-c"><svg width="14" height="14"><use href="#i-cam"/></svg></div></li>
<li class="list-group-item o-row"><div class="o-l pl23"><span class="o-exp">+</span><span class="o-stub w8"></span><svg width="18" height="18" viewBox="0 0 16 16"><use href="#i-lamp"/></svg><span class="ml2">Lamp</span><span class="o-sep ml10"></span><svg class="ml7" width="18" height="18" viewBox="0 0 16 16"><use href="#i-glamp"/></svg></div><div class="o-c"><svg width="15" height="11"><use href="#i-eye"/></svg></div><div class="o-c"><svg width="11" height="15"><use href="#i-ptr"/></svg></div><div class="o-c"><svg width="14" height="14"><use href="#i-cam"/></svg></div></li>
<li class="list-group-item o-row"><div class="o-l pl23"><span class="o-exp">+</span><span class="o-stub w8"></span><svg width="18" height="18" viewBox="0 0 16 16"><use href="#i-tri"/></svg><span class="ml2 text-white">Sphere</span><span class="o-sep ml10"></span><svg class="ml7" width="18" height="18" viewBox="0 0 16 16"><use href="#i-gtri"/></svg></div><div class="o-c"><svg width="15" height="11"><use href="#i-eye"/></svg></div><div class="o-c"><svg width="11" height="15"><use href="#i-ptr"/></svg></div><div class="o-c"><svg width="14" height="14"><use href="#i-cam"/></svg></div></li>
<li class="o-tree list-unstyled"></li>
</ul>
<div class="o-scr"><div class="o-thumb"></div></div>
<div class="p-hd d-flex align-items-center">
<div class="bl-sel w30 d-flex align-items-center justify-content-center"><svg width="15" height="15"><use href="#i-pro"/></svg><svg width="7" height="13"><use href="#ud"/></svg></div>
<div class="p-tabs d-flex">
<div class="p-tab on"><svg width="15" height="15"><use href="#i-cam"/></svg></div>
<div class="p-tab"><svg width="15" height="15"><use href="#i-lyr"/></svg></div>
<div class="p-tab"><svg width="15" height="15"><use href="#i-scene"/></svg></div>
<div class="p-tab"><svg width="15" height="15"><use href="#i-world"/></svg></div>
<div class="p-tab"><svg width="15" height="15"><use href="#i-cube"/></svg></div>
<div class="p-tab"><svg width="15" height="15"><use href="#i-link"/></svg></div>
<div class="p-tab"><svg width="15" height="15"><use href="#i-wr"/></svg></div>
<div class="p-tab"><svg width="15" height="15"><use href="#i-mtri"/></svg></div>
<div class="p-tab"><svg width="15" height="15"><use href="#i-mat"/></svg></div>
<div class="p-tab"><svg width="15" height="15"><use href="#i-tex"/></svg></div>
</div>
<div class="corner ctr"></div>
</div>
<div class="p-sc d-flex align-items-center"><svg width="15" height="15"><use href="#i-pin"/></svg><svg class="ml7" width="14" height="14"><use href="#i-scene"/></svg><span class="ml4">Scene</span></div>
<section class="sec m8">
<div class="s-h d-flex align-items-center"><span class="tri-d"></span>Визуализация<div class="grip"></div></div>
<div class="sec-b">
<div class="btn-group s20 d-flex m7">
<div class="btn bl-btn d-flex align-items-center px-1"><svg width="15" height="15"><use href="#i-cam"/></svg>Визуали...</div>
<div class="btn bl-btn d-flex align-items-center px-1"><svg width="15" height="15"><use href="#i-clap"/></svg>Анимация</div>
<div class="btn bl-btn d-flex align-items-center px-1"><svg width="15" height="15"><use href="#i-spk"/></svg><span class="mx-auto">Аудио</span></div>
</div>
<div class="d-flex align-items-center m5"><div class="rl rw82">Отображен...</div><div class="bl-dg d-flex flex-grow-1 align-items-center"><div class="bl-drk flex-grow-1 h-100 d-flex justify-content-between align-items-center ps-2 pe-1 text-nowrap">Редактор изображе...<svg width="7" height="13"><use href="#ud"/></svg></div><div class="bl-dg-b d-flex align-items-center justify-content-center"><svg width="14" height="14"><use href="#i-open"/></svg></div></div></div>
</div>
</section>
<section class="sec m7">
<div class="s-h d-flex align-items-center"><span class="tri-d"></span>Размеры<div class="grip"></div></div>
<div class="sec-b">
<div class="bl-dg d-flex align-items-center m7"><div class="bl-drk flex-grow-1 h-100 d-flex justify-content-between align-items-center ps-2 pe-1">Предустановки визуализации<svg width="7" height="13"><use href="#ud"/></svg></div><div class="bl-dg-b d-flex align-items-center justify-content-center"><svg width="14" height="14"><use href="#i-plus"/></svg></div><div class="bl-dg-b d-flex align-items-center justify-content-center"><svg width="14" height="14"><use href="#i-minus"/></svg></div></div>
<div class="d-flex gap8 m7">
<div class="c2l">
<div class="rl">Разрешение:</div>
<div class="btn-group-vertical d-flex w-100 m2">
<div class="btn bl-btn bl-t bl-num"><span><i class="bl-al"></i>X:</span><span>1920 px<i class="bl-ar"></i></span></div>
<div class="btn bl-btn bl-t bl-num"><span><i class="bl-al"></i>Y:</span><span>1080 px<i class="bl-ar"></i></span></div>
<div class="btn bl-btn bl-t bl-num bl-pct"><span>50%</span></div>
</div>
<div class="rl m3">Соотн. сторон:</div>
<div class="btn-group-vertical d-flex w-100 m2">
<div class="btn bl-btn bl-t bl-num"><span><i class="bl-al"></i>X:</span><span>1.000<i class="bl-ar"></i></span></div>
<div class="btn bl-btn bl-t bl-num"><span><i class="bl-al"></i>Y:</span><span>1.000<i class="bl-ar"></i></span></div>
</div>
<div class="d-flex m5"><div class="bl-ck w63 d-flex align-items-center"><span class="bl-chk ml2"></span><span>Гра</span></div><div class="bl-ck d-flex align-items-center dimt"><span class="bl-chk dim"></span><span>Обр</span></div></div>
</div>
<div class="c2r">
<div class="rl">Диапазон кадров:</div>
<div class="btn-group-vertical d-flex w-100 m2">
<div class="btn bl-btn bl-t bl-num"><span><i class="bl-al"></i>Нач. кадр:</span><span>1<i class="bl-ar"></i></span></div>
<div class="btn bl-btn bl-t bl-num"><span><i class="bl-al"></i>Кон. кадр:</span><span>250<i class="bl-ar"></i></span></div>
<div class="btn bl-btn bl-t bl-num"><span><i class="bl-al"></i>Шаг кадра:</span><span>1<i class="bl-ar"></i></span></div>
</div>
<div class="rl m3">Частота кадров:</div>
<div class="bl-sel d-flex align-items-center justify-content-between text-light m2 ps-2"><span>24 fps</span><svg width="7" height="13"><use href="#ud"/></svg></div>
<div class="rl m2">Перерасп. времени:</div>
<div class="btn-group s20 d-flex m2">
<div class="btn bl-btn bl-num bl-cl"><span><i class="bl-al"></i>:100</span><i class="bl-ar"></i></div>
<div class="btn bl-btn bl-num bl-cl"><span><i class="bl-al"></i>:</span><span>100<i class="bl-ar"></i></span></div>
</div>
</div>
</div>
</div>
</section>
<section class="sec m8">
<div class="s-h d-flex align-items-center"><span class="tri-d"></span><span class="bl-chk"><svg width="11" height="11" viewBox="0 0 12 12"><path d="M2 6l3 4 6-9" fill="none" stroke="#e8e8e8" stroke-width="2"/></svg></span><span>Сглаживание</span><div class="grip"></div></div>
<div class="sec-b">
<div class="d-flex gap8 m7">
<div class="c2l btn-group s20 d-flex">
<div class="btn bl-btn bl-drk bl-ctr">5</div><div class="btn bl-btn bl-blue bl-ctr">8</div><div class="btn bl-btn bl-drk bl-ctr">11</div><div class="btn bl-btn bl-drk bl-ctr">16</div>
</div>
<div class="c2r bl-sel d-flex align-items-center justify-content-between text-light ps-2"><span>Митчелл-Нетра...</span><svg width="7" height="13"><use href="#ud"/></svg></div>
</div>
<div class="d-flex gap8 m2">
<div class="c2l d-flex align-items-center"><div class="bl-ck d-flex align-items-center"><span class="bl-chk ml2"></span><span>Все сэмплы</span></div></div>
<div class="c2r btn bl-btn s20 bl-num bl-cl"><span><i class="bl-al"></i>Разме:</span><span>1.000 px<i class="bl-ar"></i></span></div>
</div>
</div>
</section>
<section class="sec m7"><div class="s-h c23 d-flex align-items-center"><span class="tri-r"></span><span class="bl-chk"></span><span>Размытие при движении</span><div class="grip"></div></div></section>
<section class="sec"><div class="s-h c23 d-flex align-items-center"><span class="tri-r"></span>Затенение<div class="grip"></div></div></section>
<section class="sec"><div class="s-h c23 d-flex align-items-center"><span class="tri-r"></span>Производительность<div class="grip"></div></div></section>
<section class="sec"><div class="s-h c23 d-flex align-items-center"><span class="tri-r"></span>Постобработка<div class="grip"></div></div></section>
<section class="sec"><div class="s-h c23 d-flex align-items-center"><span class="tri-r"></span><span class="bl-chk"></span><span>Freestyle</span><div class="grip"></div></div></section>
<section class="sec"><div class="s-h c23 d-flex align-items-center"><span class="tri-r"></span><span class="bl-chk"></span><span>Штамп</span><div class="grip"></div></div></section>
<section class="sec">
<div class="s-h d-flex align-items-center"><span class="tri-d"></span>Вывод<div class="grip"></div></div>
<div class="sec-b">
<div class="bl-dg d-flex align-items-center m6"><div class="bl-dg-f">/tmp\</div><div class="bl-dg-b d-flex align-items-center justify-content-center"><svg width="15" height="15"><use href="#i-fold"/></svg></div></div>
<div class="d-flex m9"><div class="bl-ck d-flex align-items-center bl-w1"><span class="bl-chk ml2"><svg width="11" height="11" viewBox="0 0 12 12"><path d="M2 6l3 4 6-9" fill="none" stroke="#e8e8e8" stroke-width="2"/></svg></span><span>Перезаписыв...</span></div><div class="bl-ck d-flex align-items-center"><span class="bl-chk"><svg width="11" height="11" viewBox="0 0 12 12"><path d="M2 6l3 4 6-9" fill="none" stroke="#e8e8e8" stroke-width="2"/></svg></span><span>С расширением</span></div></div>
<div class="d-flex m8"><div class="bl-ck d-flex align-items-center"><span class="bl-chk ml2"></span><span>Заполнители</span></div></div>
<div class="d-flex gap8 m7">
<div class="c2l bl-sel d-flex align-items-center text-light"><svg width="15" height="15"><use href="#i-png"/></svg><span class="ms-1">PNG</span><svg class="ms-auto" width="7" height="13"><use href="#ud"/></svg></div>
<div class="c2r btn-group s20 d-flex"><div class="btn bl-btn bl-drk bl-ctr">BW</div><div class="btn bl-btn bl-drk bl-ctr">RGB</div><div class="btn bl-btn bl-blue bl-ctr">RGBA</div></div>
</div>
<div class="d-flex align-items-center m3"><div class="rl rw82">Глубина ц...</div><div class="btn-group s20 d-flex flex-grow-1"><div class="btn bl-btn bl-blue bl-ctr">8</div><div class="btn bl-btn bl-drk bl-ctr">16</div></div></div>
<div class="btn bl-btn bl-num bl-cmp bl-cl d-flex m3"><span>Сжатие:</span><span>15%</span></div>
</div>
</section>
<section class="sec m9"><div class="s-h d-flex align-items-center"><span class="tri-r"></span>Запекание<div class="grip"></div></div></section>
</aside>
</div>
</div>

<footer class="taskb d-flex align-items-center">
<div class="st-btn d-flex align-items-center"><svg width="18" height="18"><use href="#i-win"/></svg><i>пуск</i></div>
<div class="tk w158 d-flex align-items-center"><svg width="15" height="15"><use href="#i-chr"/></svg>Doc:RU/2.6/Manual - ...</div>
<div class="tk w157 d-flex align-items-center"><svg width="15" height="17"><use href="#i-flp"/></svg>Windows Commander...</div>
<div class="tk w158 d-flex align-items-center"><svg width="15" height="17"><use href="#i-wd"/></svg>06 Капля Объекты ...</div>
<div class="tk w158 d-flex align-items-center"><svg width="15" height="17"><use href="#i-wd"/></svg>05 Объекты в Blend...</div>
<div class="tk on w158 d-flex align-items-center"><svg width="15" height="15"><use href="#i-bl"/></svg>Blender</div>
<div class="ms-auto en">EN</div>
<div class="tray d-flex align-items-center">
<svg class="tray-a" width="17" height="17" viewBox="0 0 16 16"><circle cx="8" cy="8" r="7.500" fill="#cfe6fb"/><path d="M10 3.500 5.500 8l4.500 4.500" fill="none" stroke="#1460c8" stroke-width="2.500"/></svg>
<svg width="17" height="17"><use href="#i-net"/></svg><svg width="17" height="17"><use href="#i-kav"/></svg><svg width="17" height="17"><use href="#i-warn"/></svg>
<span class="tm">20:49</span>
</div>
</footer>
</body>
</html>
